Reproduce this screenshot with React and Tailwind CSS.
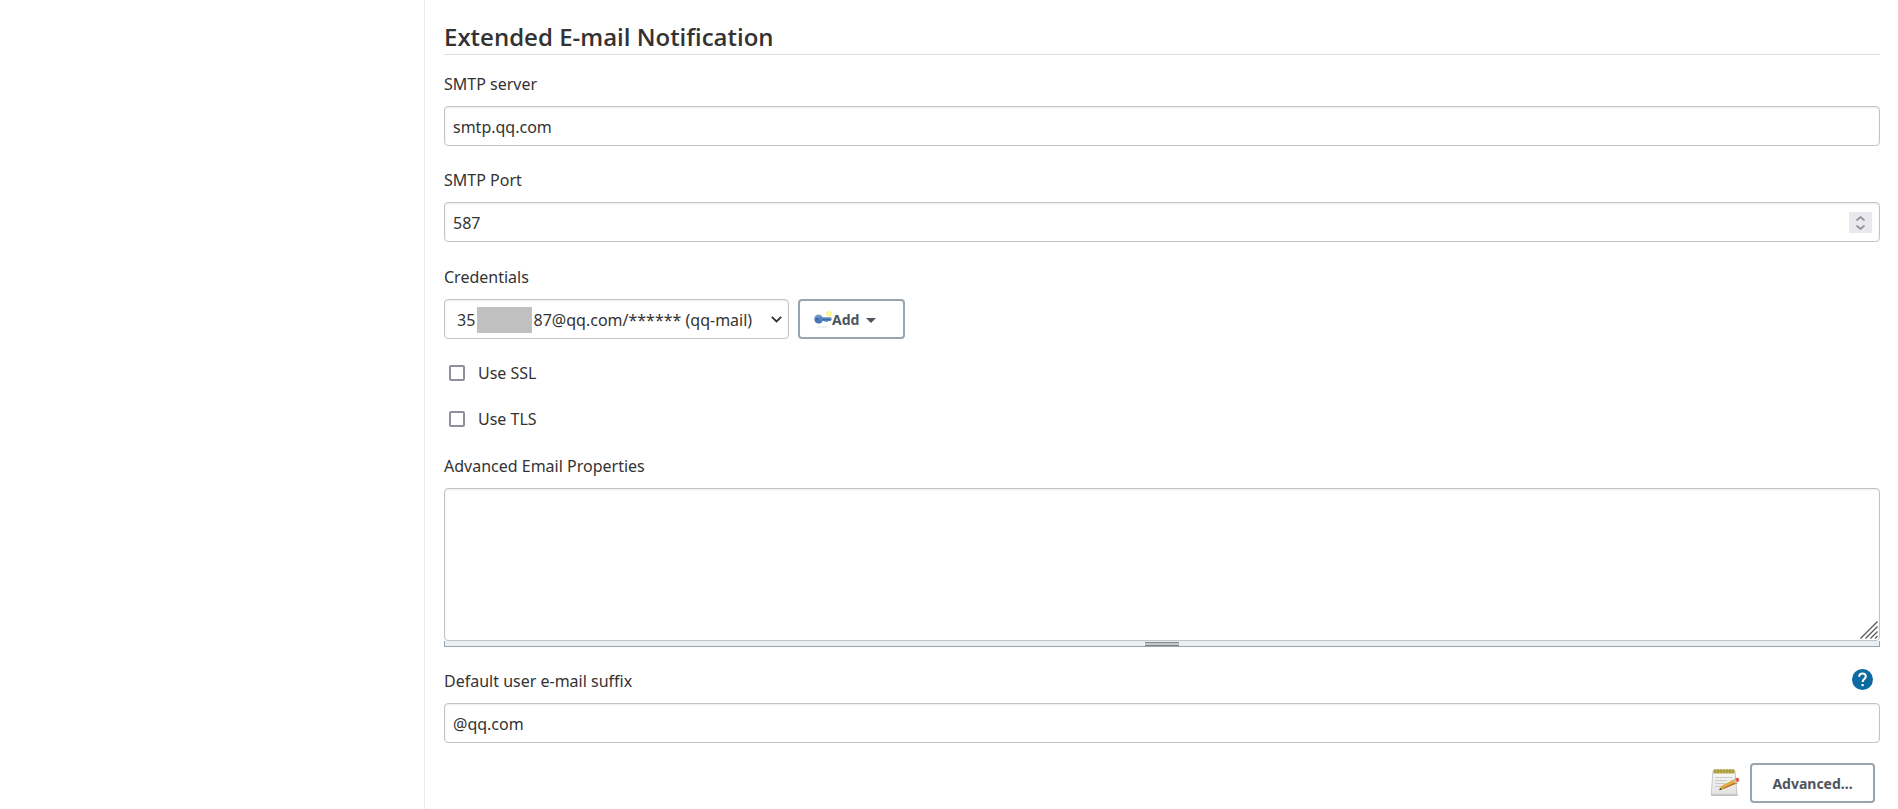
import { useRef } from "react";

const fieldClass =
  "block h-10 w-full rounded border border-[#c3c3c3] bg-white px-2 pt-0.5 text-base text-[#333] shadow-[inset_0_1px_2px_rgba(0,0,0,0.08)] outline-none focus:border-[#0b6aa2]";
const buttonClass =
  "flex h-10 items-center rounded border-2 border-[#98a4ae] bg-white pt-0.5 text-sm font-bold text-[#4d545d]";

function Label({ htmlFor, children }) {
  return (
    <label htmlFor={htmlFor} className="block w-fit text-base leading-6">
      {children}
    </label>
  );
}

function Field({ id, label, action, children }) {
  return (
    <div className="flex flex-col gap-2.5">
      <div className="flex h-6 items-start justify-between pr-[7px]">
        <Label htmlFor={id}>{label}</Label>
        {action}
      </div>
      {children}
    </div>
  );
}

function CheckRow({ id, label }) {
  return (
    <div className="flex items-center gap-[13px] pl-[5px]">
      <input
        id={id}
        type="checkbox"
        className="size-4 appearance-none rounded-xs border-2 border-[#8f8f9d] bg-white checked:bg-[#0b6aa2]"
      />
      <Label htmlFor={id}>{label}</Label>
    </div>
  );
}

function KeyIcon() {
  return (
    <svg width="18" height="18" viewBox="0 0 18 18" aria-hidden="true">
      <defs>
        <linearGradient id="key" x1="0" y1="0" x2="0" y2="1">
          <stop offset="0" stopColor="#7ea3cd" />
          <stop offset=".5" stopColor="#4f80bb" />
          <stop offset="1" stopColor="#4173b0" />
        </linearGradient>
      </defs>
      <ellipse cx="9" cy="16" rx="6.5" ry="1.2" fill="#f0f0f0" />
      <circle cx="15" cy="2.800" r="2" fill="#fffbc4" stroke="#faf27c" strokeWidth="1.600" />
      <path
        d="M4.600 3.500C2 3.500.3 5.400.3 8s1.700 4.600 4.300 4.600c2 0 3.400-1 4-2.600h1.600l.8 1 1-1 1 1.200 1.200-1.200h2.400l1-1.400V6.900l-1-.7H8.500C7.900 4.500 6.500 3.500 4.600 3.500Z"
        fill="url(#key)"
      />
      <circle cx="3.100" cy="8" r="1.200" fill="#3d669c" />
      <path d="M8.500 8.500h8" stroke="#3a69a4" strokeWidth="1" />
    </svg>
  );
}

function NotepadIcon() {
  return (
    <svg width="30" height="30" viewBox="0 0 30 30" aria-hidden="true">
      <defs>
        <linearGradient id="paper" x1="0" y1="0" x2="0" y2="1">
          <stop offset="0" stopColor="#f8f8f7" />
          <stop offset="1" stopColor="#e2e2e1" />
        </linearGradient>
      </defs>
      <path d="M1 25.500h26.500v2.500H1z" fill="#c2c2c1" />
      <path d="M3 3h22l2 23.500H1.200z" fill="url(#paper)" stroke="#c8c8c6" strokeWidth="1" />
      <path d="M3.500 1.500h21v4h-21z" fill="#b9ad4c" />
      <path d="M5 1v4M8 1v4M11 1v4M14 1v4M17 1v4M20 1v4M23 1v4" stroke="#9b8f38" strokeWidth="1" />
      <path d="M5 9.500h17M5 12.500h12M5 15.500h10M5 18.500h7" stroke="#cbcbca" strokeWidth="1.200" />
      <path d="m11.500 17.800 13.500-7 2.300 4.400-14 5.700-4 .9Z" fill="#e3ad4b" />
      <path d="m12.600 20 14-6.200.7 1.400-14 5.700Z" fill="#b57727" />
      <path d="m10.400 19.800-1.500 2.400 3.600-.6Z" fill="#5e4b30" />
      <path d="m23.500 11.500 2-1.100 2.200 4.100-2.200 1.100Z" fill="#cdcdcd" />
      <path d="m25 10.700 1.700-.9c1.900-.8 3.600 2.200 1.900 3.500l-1.600.9Z" fill="#e05a4b" />
    </svg>
  );
}

function HelpIcon() {
  return (
    <svg width="21" height="21" viewBox="0 0 21 21" aria-hidden="true">
      <circle cx="10.500" cy="10.500" r="10.500" fill="#0b6aa2" />
      <path
        d="M7.200 7.700C7.200 5.800 8.600 4.400 10.500 4.400s3.300 1.300 3.300 3.100c0 2.500-3.200 2.700-3.200 5.500"
        fill="none"
        stroke="#fff"
        strokeWidth="2"
      />
      <path d="M9.500 15h2.200v2.200H9.500z" fill="#fff" />
    </svg>
  );
}

export default function App() {
  const port = useRef(null);
  return (
    <div className="flex min-h-screen bg-white font-['Noto_Sans','Open_Sans',sans-serif] text-[#333]">
      <aside className="w-106 shrink-0" />
      <main className="min-w-0 flex-1 border-l border-[#e6edf2] pt-[21px] pr-[18px] pb-1.5 pl-[19px]">
        <h1 className="border-b border-[#dedede] pb-[1px] font-['Open_Sans','Noto_Sans',sans-serif] text-2xl leading-8 font-semibold">
          Extended E-mail Notification
        </h1>

        <div className="mt-[17px] flex flex-col gap-[22px]">
          <Field id="server" label="SMTP server">
            <input id="server" type="text" defaultValue="smtp.qq.com" className={fieldClass} />
          </Field>
          <Field id="port" label="SMTP Port">
            <div className="relative">
              <input
                ref={port}
                id="port"
                type="number"
                defaultValue="587"
                className={`${fieldClass} [appearance:textfield] [&::-webkit-inner-spin-button]:appearance-none`}
              />
              <div className="absolute inset-y-0 right-2 flex flex-col justify-center">
                <button type="button" aria-label="Increase port" onClick={() => port.current.stepUp()} className="flex h-[11px] w-[23px] items-end justify-center bg-[#e9e9ed] pb-0.5">
                  <svg width="9" height="5" viewBox="0 0 9 5" fill="none" stroke="#8f8f9d" strokeWidth="1.700"><path d="m.5 4.500 4-3.500 4 3.500" /></svg>
                </button>
                <button type="button" aria-label="Decrease port" onClick={() => port.current.stepDown()} className="flex h-2.5 w-[23px] items-start justify-center bg-[#e9e9ed] pt-0.5">
                  <svg width="9" height="5" viewBox="0 0 9 5" fill="none" stroke="#8f8f9d" strokeWidth="1.700"><path d="m.5.5 4 3.500 4-3.500" /></svg>
                </button>
              </div>
            </div>
          </Field>
        </div>

        <div className="mt-[23px] flex flex-col gap-[22px]">
          <Field id="credentials" label="Credentials">
            <div className="flex gap-[9px]">
              <div className="relative w-[345px]">
                <select id="credentials" className={`${fieldClass} appearance-none pr-6 pl-3`}>
                  <option>{"35" + "\u00a0".repeat(14) + "87@qq.com/****** (qq-mail)"}</option>
                </select>
                <span className="absolute top-2 left-[33px] h-[26px] w-[55px] bg-[#c0c0c0]" />
                <svg className="pointer-events-none absolute top-[17px] right-[7px]" width="11" height="7" viewBox="0 0 11 7" fill="none" stroke="#333" strokeWidth="1.800" aria-hidden="true"><path d="m.8.8 4.700 4.700L10.200.8" /></svg>
              </div>
              <button type="button" className={`${buttonClass} w-[107px] pl-3.5`}>
                <KeyIcon />
                Add
                <svg className="ml-[7px]" width="10" height="5" viewBox="0 0 10 5" aria-hidden="true"><path d="M0 0h10L5 5Z" fill="#4d545d" /></svg>
              </button>
            </div>
          </Field>
          <CheckRow id="ssl" label="Use SSL" />
          <CheckRow id="tls" label="Use TLS" />
        </div>

        <div className="mt-[23px] flex flex-col gap-[22px]">
          <Field id="properties" label="Advanced Email Properties">
            <div>
              <div className="relative">
                <textarea id="properties" className={`${fieldClass} h-[153px] resize-none py-2`} />
                <svg className="pointer-events-none absolute right-0.5 bottom-0.5" width="18" height="18" viewBox="0 0 18 18" stroke="#555" strokeWidth="1.200" aria-hidden="true"><path d="M.5 17.500l17-17M5.500 17.500l12-12M10.500 17.500l7-7M15 17.500l2.500-2.500" /></svg>
              </div>
              <div className="flex h-1.5 cursor-row-resize justify-center border border-t-0 border-[#98a4ae] bg-[#eaeff2]">
                <span className="mt-px h-1 w-[34px] border-y border-[#7d8787] bg-[#c4c8c6]" />
              </div>
            </div>
          </Field>
          <Field
            id="suffix"
            label="Default user e-mail suffix"
            action={<a href="#help" aria-label="Help for default user e-mail suffix" className="flex"><HelpIcon /></a>}
          >
            <input id="suffix" type="text" defaultValue="@qq.com" className={fieldClass} />
          </Field>
        </div>

        <div className="mt-5 flex items-center justify-end gap-2.5 pr-[5px]">
          <NotepadIcon />
          <button type="button" className={`${buttonClass} w-[125px] justify-center`}>
            Advanced...
          </button>
        </div>
      </main>
    </div>
  );
}
